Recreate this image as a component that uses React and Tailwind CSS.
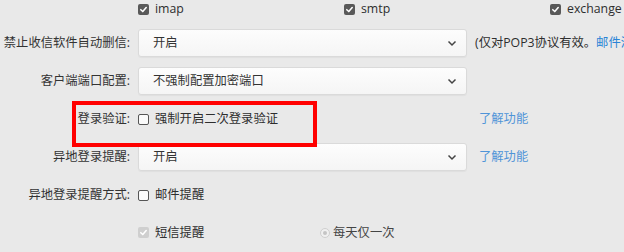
import React from "react";

const Check = ({ checked, disabled }) => (
  <span
    className={
      "inline-flex items-center justify-center w-[11px] h-[11px] rounded-[2px] shrink-0 " +
      (checked
        ? disabled
          ? "bg-[#cfcfcf]"
          : "bg-[#595959]"
        : "bg-[#fafafa] border border-[#555]")
    }
  >
    {checked && (
      <svg width="9" height="9" viewBox="0 0 10 10">
        <path d="M2 5.2 L4.2 7.3 L8 2.8" fill="none" stroke="#fff" strokeWidth="1.7" strokeLinecap="round" strokeLinejoin="round" />
      </svg>
    )}
  </span>
);

const Select = ({ value }) => (
  <div className="h-[28px] w-[329px] rounded-[3px] border border-[#dadada] bg-gradient-to-b from-[#fdfdfd] to-[#f5f5f5] flex items-center justify-between pl-[14px] pr-[9px] shadow-[0_1px_1px_rgba(0,0,0,0.04)]">
    <span className="text-[#333]">{value}</span>
    <svg width="10" height="7" viewBox="0 0 10 7">
      <path d="M1.5 1.5 L5 5 L8.5 1.5" fill="none" stroke="#444" strokeWidth="1.5" />
    </svg>
  </div>
);

const Label = ({ children }) => (
  <div className="h-[28px] flex items-center justify-end text-[#333] whitespace-nowrap">{children}</div>
);

export default function App() {
  return (
    <div
      className="relative w-[624px] h-[252px] overflow-hidden bg-[#e9e9e9] text-[12.3px] leading-none text-[#2e2e2e]"
      style={{ fontFamily: '"Open Sans", "Noto Sans CJK SC", sans-serif' }}
    >
      <div className="grid grid-cols-[130px_329px_1fr] gap-x-[8px] gap-y-[10px] grid-rows-[19px_28px_28px_28px_28px_28px_28px]">
        <div />
        <div className="col-span-2 flex items-center">
          <div className="w-[206px] flex items-center gap-[6px]"><Check checked />imap</div>
          <div className="w-[206px] flex items-center gap-[6px]"><Check checked />smtp</div>
          <div className="flex items-center gap-[6px] whitespace-nowrap"><Check checked />exchange</div>
        </div>

        <Label>禁止收信软件自动删信:</Label>
        <Select value="开启" />
        <div className="flex items-center whitespace-nowrap">
          (仅对POP3协议有效。<span className="text-[#2a84d6]">邮件清理规则)</span>
        </div>

        <Label>客户端端口配置:</Label>
        <Select value="不强制配置加密端口" />
        <div />

        <Label>登录验证:</Label>
        <div className="flex items-center gap-[6px]"><Check />强制开启二次登录验证</div>
        <div className="flex items-center pl-[4px] text-[#4f94d8]">了解功能</div>

        <Label>异地登录提醒:</Label>
        <Select value="开启" />
        <div className="flex items-center pl-[4px] text-[#4f94d8]">了解功能</div>

        <Label>异地登录提醒方式:</Label>
        <div className="flex items-center gap-[6px]"><Check />邮件提醒</div>
        <div />

        <div />
        <div className="flex items-center">
          <div className="w-[182px] flex items-center gap-[6px]"><Check checked disabled />短信提醒</div>
          <div className="flex items-center gap-[3px] text-[#444]">
            <span className="w-[10px] h-[10px] rounded-full border border-[#cfcfcf] bg-[#f0f0f0] flex items-center justify-center">
              <span className="w-[4px] h-[4px] rounded-full bg-[#c4c4c4]" />
            </span>
            每天仅一次
          </div>
        </div>
        <div />
      </div>

      <div className="absolute left-[72px] top-[101px] w-[245px] h-[46px] border-[4px] border-[#f00]" />
    </div>
  );
}
